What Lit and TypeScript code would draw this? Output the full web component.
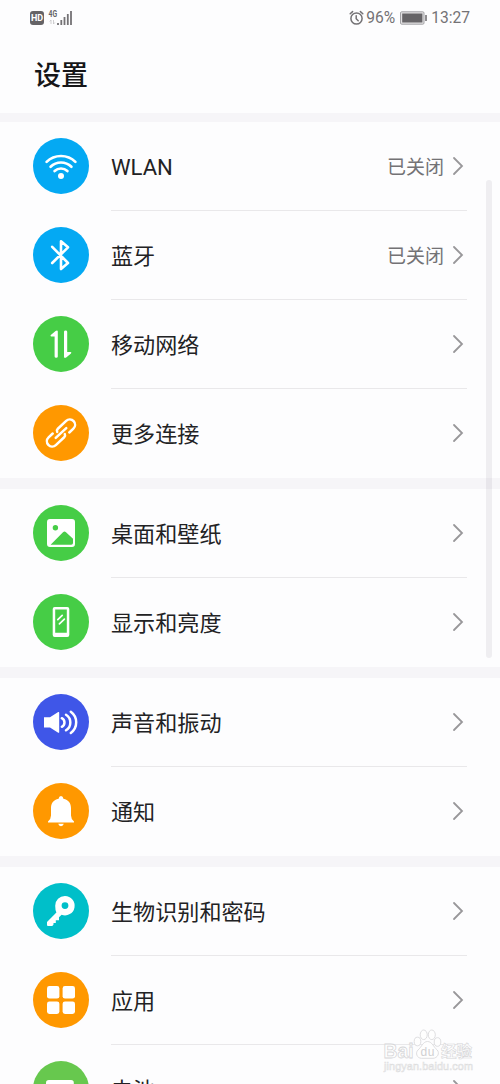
import { LitElement, html, css, svg } from "lit";
import { customElement, property } from "lit/decorators.js";

const icons: Record<string, unknown> = {
  wifi: svg`<g fill="none" stroke="#fff" stroke-width="2.7" stroke-linecap="round">
    <path d="M13.6 23.9A20.5 20.5 0 0 1 42.4 23.9"/><path d="M17.6 28.7A15 15 0 0 1 38.4 28.7"/><path d="M21.6 33A9.4 9.4 0 0 1 34.4 33"/></g>
    <circle cx="28" cy="38" r="3" fill="#fff"/>`,
  bluetooth: svg`<path d="M19.2 19.8L35 36L28 42V14.2L35 20.3L19.2 36" fill="none" stroke="#fff" stroke-width="2.6" stroke-linejoin="round" stroke-linecap="round"/>`,
  mobile: svg`<path d="M24.8 15.6V40.6Q24.8 41.8 23.2 41.8T21.6 40.6V20.4H18.3Q16.8 20.2 17.8 19L22.6 14.9Q24.8 13.8 24.8 15.6Z" fill="#fff"/>
    <path d="M31 40.8V15.8Q31 14.6 32.6 14.6T34.2 15.8V36H37.6Q39 36.3 38 37.4L33.2 41.6Q31 42.6 31 40.8Z" fill="#fff"/>`,
  link: svg`<g transform="rotate(-43 28 28)" fill="none" stroke="#fff" stroke-width="2.5" stroke-linecap="round">
    <path d="M26 24.6Q26.6 22.7 28.6 22.7H40A5.3 5.3 0 0 1 40 33.3H34.4"/><path d="M30 31.4Q29.4 33.3 27.4 33.3H16A5.3 5.3 0 0 1 16 22.7H21.6"/><path d="M20.8 28H35.2"/></g>`,
  picture: svg`<path fill="#fff" fill-rule="evenodd" d="M17 14H39A3 3 0 0 1 42 17V39A3 3 0 0 1 39 42H17A3 3 0 0 1 14 39V17A3 3 0 0 1 17 14ZM22.4 20A2.7 2.7 0 1 0 22.4 25.4A2.7 2.7 0 0 0 22.4 20ZM17.6 39.8H38.2Q40 39.8 40 38V33.8L33 27.2Q31.5 26 30 27.2Z"/>`,
  phone: svg`<path fill="#fff" fill-rule="evenodd" d="M21.7 13H34.3A2 2 0 0 1 36.3 15V41A2 2 0 0 1 34.3 43H21.7A2 2 0 0 1 19.7 41V15A2 2 0 0 1 21.7 13ZM22.2 15.6V38.8H33.8V15.6Z"/>
    <path d="M24.8 25.6L29.2 21.4M26.4 29.8L31.4 25.2" stroke="#fff" stroke-width="1.7" stroke-linecap="round"/>`,
  sound: svg`<path d="M11 23.2H17L25.2 18Q26.2 17.6 26.2 18.8V38Q26.2 39.2 25.2 38.7L17 33.6H11Z" fill="#fff"/>
    <g fill="none" stroke="#fff" stroke-width="2.5" stroke-linecap="round"><path d="M28.8 24.2A4.8 4.8 0 0 1 28.8 32.8"/><path d="M33 20.7A9.2 9.2 0 0 1 33 36.3"/><path d="M37.8 17.7A13.2 13.2 0 0 1 37.8 39"/></g>`,
  bell: svg`<path d="M25.6 15.8Q26 13 28 13T30.4 15.8C35.6 17 38 20.4 38 25V32.5Q38 36 41 38.4V39.5H15V38.4Q18 36 18 32.5V25C18 20.4 20.4 17 25.6 15.8ZM25.2 40.8H30.8Q30.2 43.2 28 43.2T25.2 40.8Z" fill="#fff"/>`,
  key: svg`<path fill="#fff" fill-rule="evenodd" d="M32 13A9.7 9.7 0 1 1 28.6 31.8L26 34.3V37.3H22.8V40H20.5V41.6L19.3 43H15Q14 43 14 42V39L23.4 29.4Q22.2 27.4 22.2 22.8A9.7 9.7 0 0 1 32 13ZM32 19.2A3.4 3.4 0 1 0 32 26A3.4 3.4 0 0 0 32 19.2Z"/>`,
  apps: svg`<g fill="#fff"><rect x="14" y="14" width="12.4" height="12.6" rx="2.4"/><rect x="29.6" y="14" width="12.4" height="12.6" rx="2.4"/><rect x="14" y="29.4" width="12.4" height="12.6" rx="2.4"/><rect x="29.6" y="29.4" width="12.4" height="12.6" rx="2.4"/></g>`,
  battery: svg`<rect x="13" y="19" width="27.8" height="18" rx="2.8" fill="#fff"/><rect x="41.5" y="24" width="2" height="8" rx="1" fill="#fff"/>`,
};

interface Item {
  icon: string;
  color: string;
  label: string;
  value?: string;
}

const groups: Item[][] = [
  [
    { icon: "wifi", color: "#04a9f3", label: "WLAN", value: "已关闭" },
    { icon: "bluetooth", color: "#04a9f3", label: "蓝牙", value: "已关闭" },
    { icon: "mobile", color: "#46cd46", label: "移动网络" },
    { icon: "link", color: "#ff9800", label: "更多连接" },
  ],
  [
    { icon: "picture", color: "#46cd46", label: "桌面和壁纸" },
    { icon: "phone", color: "#46cd46", label: "显示和亮度" },
  ],
  [
    { icon: "sound", color: "#3f56e8", label: "声音和振动" },
    { icon: "bell", color: "#ff9800", label: "通知" },
  ],
  [
    { icon: "key", color: "#00bfc9", label: "生物识别和密码" },
    { icon: "apps", color: "#ff9800", label: "应用" },
    { icon: "battery", color: "#67c84e", label: "电池" },
  ],
];

@customElement("settings-row")
class SettingsRow extends LitElement {
  @property({ attribute: false }) item!: Item;

  static styles = css`
    :host { display: flex; height: 89px; padding-left: 33px; padding-right: 33px; gap: 22px; align-items: center; }
    .icon { width: 56px; height: 56px; flex: none; display: block; }
    .body { flex: 1; height: 100%; box-sizing: border-box; display: flex; align-items: center; border-bottom: 1px solid var(--line, #e9e8ea); }
    .label { flex: 1; font-size: 22.1px; line-height: 32px; color: #222224; padding-top: 2px; }
    .value { font-size: 19px; line-height: 28px; color: #737275; padding-top: 4px; margin-right: 8px; }
    .chevron { width: 12px; height: 20px; margin-right: 3px; display: block; }
  `;

  render() {
    const { icon, color, label, value } = this.item;
    return html`
      <svg class="icon" viewBox="0 0 56 56"><circle cx="28" cy="28" r="28" fill=${color} />${icons[icon]}</svg>
      <div class="body">
        <span class="label">${label}</span>
        ${value ? html`<span class="value">${value}</span>` : ""}
        <svg class="chevron" viewBox="0 0 12 20"><path d="M2 2L10 10L2 18" fill="none" stroke="#98979a" stroke-width="1.8" stroke-linecap="round" /></svg>
      </div>
    `;
  }
}

@customElement("status-bar")
class StatusBar extends LitElement {
  static styles = css`
    :host { display: flex; height: 35px; padding: 0 30px; align-items: center; font: 15.6px/20px Roboto, sans-serif; color: #747275; }
    .hd { width: 14px; height: 14px; border-radius: 3px; background: #656366; color: #fff; font: bold 9px/14px Roboto, sans-serif; text-align: center; }
    .net { width: 28px; height: 18px; margin-left: 3px; flex: none; }
    .space { flex: 1; }
    .alarm { width: 15px; height: 16px; margin-right: 2px; }
    .batt { width: 28px; height: 14px; margin: 0 3px 0 5px; }
    .text { padding-top: 1px; }
  `;

  render() {
    return html`
      <span class="hd">HD</span>
      <svg class="net" viewBox="47 8 28 18">
        <text x="48.5" y="16.4" font-family="Roboto" font-weight="700" font-size="8.5" textLength="8.5" lengthAdjust="spacingAndGlyphs" fill="#656366">4G</text>
        <path d="M51 23V19L49.7 20.5M53.5 19V23L54.8 21.5" fill="none" stroke="#c4c3c5" stroke-width=".8" />
        <path d="M58 24V22M61.3 24V19M64.5 24V16M67.8 24V13M71 24V10" stroke="#747275" stroke-width="1.8" />
      </svg>
      <span class="space"></span>
      <svg class="alarm" viewBox="0 0 15 16"><g fill="none" stroke="#747275" stroke-width="1.5" stroke-linecap="round"><circle cx="7.5" cy="8.5" r="5.6" /><path d="M1.2 3.8L3.6 1.6M13.8 3.8L11.4 1.6M7.2 5.8V8.8L9.2 10.8" /></g></svg>
      <span class="text">96%</span>
      <svg class="batt" viewBox="0 0 28 14"><rect x=".5" y=".8" width="23.5" height="12.4" rx="1.2" fill="#e2e1e3" stroke="#a3a2a5" /><rect x="2.2" y="2.5" width="20.2" height="9" fill="#666467" /><path d="M26 4V10" stroke="#747275" stroke-width="1.6" /></svg>
      <span class="text">13:27</span>
    `;
  }
}

@customElement("app-root")
class AppRoot extends LitElement {
  static styles = css`
    :host { display: block; position: relative; height: 1084px; overflow: hidden; background: #fdfdfe; font-family: Roboto, "Noto Sans CJK SC", sans-serif; }
    .title { height: 77.5px; box-sizing: border-box; margin: 0; padding: 21px 34px 0; font-size: 27px; line-height: 40px; font-weight: 500; color: #161618; }
    .group { border-top: 11px solid #f6f5f8; }
    .group:first-of-type { border-top-width: 9px; }
    .last { --line: transparent; }
    .scroll { position: absolute; left: 486px; top: 180px; width: 6px; height: 478px; border-radius: 3px; background: rgba(80, 70, 90, 0.08); }
    .mark { position: absolute; left: 380px; top: 1026px; width: 96px; height: 50px; }
  `;

  render() {
    return html`
      <status-bar></status-bar>
      <h1 class="title">设置</h1>
      ${groups.map(
        (g) => html`<div class="group">
          ${g.map((item, i) => html`<settings-row class=${i === g.length - 1 ? "last" : ""} .item=${item}></settings-row>`)}
        </div>`
      )}
      <div class="scroll"></div>
      <svg class="mark" viewBox="380 1026 96 50">
        <g fill="#fefefe" stroke="#d6d6d8" stroke-width=".8" font-family="Liberation Sans, sans-serif">
          <ellipse cx="417.5" cy="1041.5" rx="3.3" ry="4.3" /><ellipse cx="423.7" cy="1034.8" rx="3.5" ry="4.8" /><ellipse cx="431.8" cy="1034.8" rx="3.5" ry="4.8" /><ellipse cx="437.5" cy="1042" rx="3.3" ry="4.3" />
          <path d="M427.5 1041.5C432 1041.5 433.5 1047 437.2 1050C440 1053 437.5 1058.3 433 1058.3H421.5C417 1058.3 415 1053 418 1050C421.7 1047 423 1041.5 427.5 1041.5Z" />
          <text x="383.5" y="1057.5" font-size="21" font-weight="700" textLength="30" lengthAdjust="spacingAndGlyphs">Bai</text>
          <text x="420.5" y="1056" font-size="12" textLength="14" fill="#d0d0d2" stroke="none">du</text>
          <text x="441" y="1056.5" font-size="15.5" font-weight="700" textLength="31" stroke-width=".6" font-family="Noto Sans CJK SC">经验</text>
        </g>
        <text x="384" y="1070" font-family="Liberation Sans, sans-serif" font-size="10.8" textLength="89" fill="#fdfdfd" stroke="#dededf" stroke-width=".6">jingyan.baidu.com</text>
      </svg>
    `;
  }
}
